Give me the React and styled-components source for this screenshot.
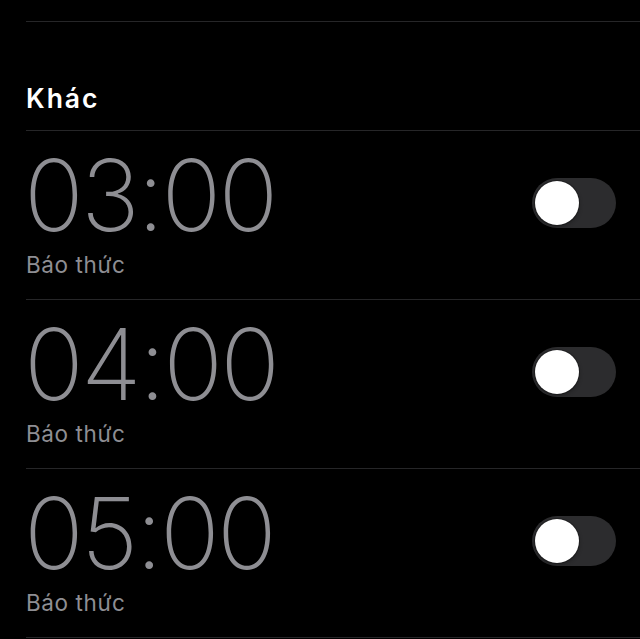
import React, { useState } from 'react'
import styled, { createGlobalStyle } from 'styled-components'

const Global = createGlobalStyle`
  html, body {
    margin: 0;
    padding: 0;
    background: #000;
  }
  body {
    font-family: Inter, "Noto Sans", sans-serif;
    -webkit-font-smoothing: antialiased;
  }
`

const Page = styled.div`
  width: 640px;
  height: 639px;
  overflow: hidden;
  background: #000;
  padding-top: 21px;
  box-sizing: border-box;
`

const List = styled.div`
  margin-left: 26px;
  border-top: 1px solid #262628;
`

const Header = styled.div`
  height: 109px;
  box-sizing: border-box;
  border-bottom: 1px solid #262628;
  display: flex;
  align-items: flex-end;
  padding-bottom: 17px;
  color: #fff;
  font-size: 26.5px;
  font-weight: 600;
  letter-spacing: 2px;
  line-height: 30px;
`

const Row = styled.div`
  height: 169px;
  box-sizing: border-box;
  border-bottom: 1px solid #262628;
  display: flex;
  align-items: flex-start;
  justify-content: space-between;
  padding: 24px 24px 0 0;
`

const Info = styled.div`
  display: flex;
  flex-direction: column;
  color: #8e8e93;
`

const Time = styled.div`
  font-weight: 200;
  font-size: 99px;
  line-height: 80px;
  letter-spacing: -2.8px;
  margin-left: -2px;
`

const Label = styled.div`
  font-size: 22.5px;
  line-height: 28px;
  letter-spacing: 0.6px;
  margin-top: 16px;
`

const Track = styled.button`
  width: 84px;
  height: 50px;
  border-radius: 25px;
  border: none;
  padding: 3px;
  margin-top: 23px;
  background: ${p => (p.on ? '#34c759' : '#2c2c2e')};
  display: flex;
  justify-content: ${p => (p.on ? 'flex-end' : 'flex-start')};
  align-items: center;
  cursor: pointer;
`

const Knob = styled.span`
  width: 44px;
  height: 44px;
  border-radius: 50%;
  background: #fff;
  box-shadow: 0 0 0 1px rgba(0, 0, 0, 0.25), 0 2px 4px rgba(0, 0, 0, 0.3);
`

const alarms = ['03:00', '04:00', '05:00']

const App = () => {
  const [on, setOn] = useState([false, false, false])

  const toggle = (i) => {
    setOn(on.map((v, j) => (j === i ? !v : v)))
  }

  return (
    <Page>
      <Global />
      <List>
        <Header>Khác</Header>
        {alarms.map((t, i) => (
          <Row key={t}>
            <Info>
              <Time>{t}</Time>
              <Label>Báo thức</Label>
            </Info>
            <Track on={on[i]} onClick={() => toggle(i)}>
              <Knob />
            </Track>
          </Row>
        ))}
      </List>
    </Page>
  )
}

export default App
